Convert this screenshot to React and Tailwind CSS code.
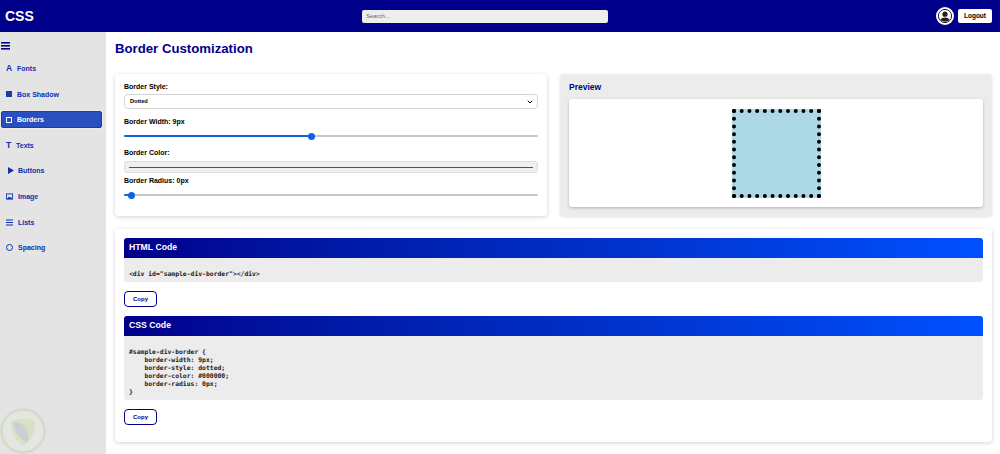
import React from 'react'
import { ChevronDown } from 'lucide-react'

const HollowSquare = () => <span className="w-[6px] h-[6px] border-[1.5px] border-white bg-transparent"></span>
const SolidSquare = () => <span className="w-[6px] h-[6px] bg-[#1c3da0]"></span>
const Glyph = ({ text }) => <span className="text-[8.5px] font-bold leading-none">{text}</span>
const Ring = () => <span className="w-[7px] h-[7px] rounded-full border-[1.5px] border-[#0d2fb0]"></span>

const PlayIcon = () => (
    <svg width="6" height="7" viewBox="0 0 6 7" fill="currentColor">
        <path d="M0 0 L6 3.5 L0 7 Z" />
    </svg>
)

const ImageIcon = () => (
    <svg width="7" height="7" viewBox="0 0 7 7">
        <rect x="0.4" y="0.9" width="6.2" height="5.2" fill="#dfe6f5" stroke="#0d2fb0" strokeWidth="0.9" />
        <path d="M1 6 L3 3.4 L4.3 4.8 L5 4 L6 6 Z" fill="#0d2fb0" />
    </svg>
)

const ListIcon = () => (
    <svg width="7" height="7" viewBox="0 0 7 7" fill="#0d2fb0">
        <rect y="0.5" width="7" height="1" />
        <rect y="3" width="7" height="1" />
        <rect y="5.5" width="7" height="1" />
    </svg>
)

const navItems = [
    { label: 'Fonts', icon: <Glyph text="A" />, slot: 'w-[7px]' },
    { label: 'Box Shadow', icon: <SolidSquare />, slot: 'w-[7px]' },
    { label: 'Borders', icon: <HollowSquare />, slot: 'w-[7px]', active: true },
    { label: 'Texts', icon: <Glyph text="T" />, slot: 'w-[6px]' },
    { label: 'Buttons', icon: <PlayIcon />, slot: 'w-[8px] pl-[2px]' },
    { label: 'Image', icon: <ImageIcon />, slot: 'w-[8px]' },
    { label: 'Lists', icon: <ListIcon />, slot: 'w-[8px]' },
    { label: 'Spacing', icon: <Ring />, slot: 'w-[8px]' },
]

const htmlCode = '<div id="sample-div-border"></div>'
const cssCode = `#sample-div-border {
    border-width: 9px;
    border-style: dotted;
    border-color: #000000;
    border-radius: 0px;
}`

const Slider = ({ percent }) => (
    <div className="h-[14px] flex items-center">
        <div className="relative w-full h-[2px] bg-[#c8c8c8] rounded-full">
            <div className="h-full bg-[#0f62e6] rounded-full" style={{ width: `${percent}%` }}></div>
            <div
                className="absolute top-[-2.5px] w-[7px] h-[7px] rounded-full bg-[#0f62e6] -ml-[3.5px]"
                style={{ left: `${percent}%` }}
            ></div>
        </div>
    </div>
)

const NavItem = ({ item }) => (
    <div
        className={
            item.active
                ? 'flex items-center gap-[4px] h-[17px] ml-[1px] mr-[4px] pl-[4px] bg-[#2a50c0] border border-[#1c3da0] rounded-[2px] text-white shadow-[0_0_2px_#ffffff]'
                : 'flex items-center gap-[4px] h-[17px] ml-[1px] mr-[4px] pl-[4px] border border-transparent text-[#0d2fb0]'
        }
    >
        <span className={`${item.slot} flex justify-start items-center shrink-0`}>{item.icon}</span>
        <span className="text-[7px] font-bold leading-none">{item.label}</span>
    </div>
)

const CodeBlock = ({ title, code, className }) => (
    <div>
        <div className="h-[20px] flex items-center pl-[5px] bg-gradient-to-r from-[#00008b] to-[#0050ff] rounded-t-[3px] text-white text-[8.7px] font-bold">
            {title}
        </div>
        <pre className={`${className} px-[5px] bg-[#ececec] rounded-b-[3px] font-['DejaVu_Sans_Mono',monospace] text-[6.4px] leading-[8px] font-bold text-[#1a1a1a]`}>
            {code}
        </pre>
        <button className="block w-[33px] h-[16px] mt-[9px] bg-white border border-[#00008b] rounded-[4px] text-[#00008b] text-[6px] font-bold">
            Copy
        </button>
    </div>
)

const Watermark = () => (
    <svg className="absolute left-0 bottom-0 w-[47px] h-[47px] opacity-60" viewBox="0 0 47 47">
        <circle cx="23" cy="24" r="21.5" fill="#e6e6e2" stroke="#c9d6b8" strokeWidth="2.5" />
        <path d="M11 14 Q23 9 35 14 Q36 30 23 39 Q10 30 11 14 Z" fill="#cfe0ae" />
        <path d="M13 15 Q14 28 27 36 Q31 30 25 20 Q20 15 13 15 Z" fill="#b9c4c9" />
    </svg>
)

const App = () => {
    return (
        <div className="h-screen flex flex-col overflow-hidden bg-white font-['Liberation_Sans',Arial,sans-serif]">
            <header className="h-8 shrink-0 flex items-center justify-between pl-[5px] pr-[8px] bg-[#00008b]">
                <h1 className="text-[14px] font-bold text-white leading-none">CSS</h1>
                <div className="w-[246px] h-[13px] flex items-center pl-[4px] bg-[#eeeeee] rounded-[2px] text-[6px] text-[#666666]">
                    Search...
                </div>
                <div className="flex items-center gap-[4px]">
                    <svg width="18" height="18" viewBox="0 0 18 18">
                        <circle cx="9" cy="9" r="9" fill="#ffffff" />
                        <circle cx="9" cy="9" r="6.6" fill="#ffffff" stroke="#222222" strokeWidth="1" />
                        <circle cx="9" cy="7.2" r="2.6" fill="#222222" />
                        <path d="M4.4 13 Q5 10.4 9 10.4 Q13 10.4 13.6 13 Q9 16.6 4.4 13 Z" fill="#222222" />
                    </svg>
                    <button className="w-[34px] h-[14px] bg-white rounded-[2px] text-[6.5px] font-bold text-black">
                        Logout
                    </button>
                </div>
            </header>

            <div className="flex-1 flex min-h-0">
                <aside className="relative w-[106px] shrink-0 bg-[#e4e4e4] pt-[10px]">
                    <svg width="11" height="8" viewBox="0 0 11 8" fill="#00008b" className="ml-[1px]">
                        <rect width="9" height="1.6" />
                        <rect y="3" width="9" height="1.6" />
                        <rect y="6" width="9" height="1.6" />
                    </svg>
                    <nav className="flex flex-col gap-[8.6px] mt-[10px]">
                        {navItems.map((item) => (
                            <NavItem key={item.label} item={item} />
                        ))}
                    </nav>
                    <Watermark />
                </aside>

                <main className="flex-1 min-w-0 pl-[9px] pr-[8px] pt-[8px]">
                    <h2 className="text-[13.2px] leading-[17px] font-bold text-[#00008b]">Border Customization</h2>

                    <div className="grid grid-cols-2 gap-[13px] mt-[17px]">
                        <section className="h-[142px] px-[9px] pt-[8px] bg-white rounded-[4px] shadow-[0_1px_4px_rgba(0,0,0,0.18)] text-[7px] font-bold text-black">
                            <label className="block leading-[9px]">Border Style:</label>
                            <div className="flex items-center justify-between h-[15px] mt-[3px] pl-[5px] pr-[3px] bg-white border border-[#d4d4d4] rounded-[4px] text-[5.6px] font-bold">
                                Dotted
                                <ChevronDown size={8} strokeWidth={3} />
                            </div>
                            <label className="block mt-[8px] leading-[9px]">Border Width: 9px</label>
                            <div className="mt-[3px]">
                                <Slider percent={45.3} />
                            </div>
                            <label className="block mt-[5px] leading-[9px]">Border Color:</label>
                            <div className="flex items-center h-[12px] mt-[4px] px-[4px] bg-[#efefef] border border-[#dddddd] rounded-[3px]">
                                <div className="w-full h-[1px] bg-[#555555]"></div>
                            </div>
                            <label className="block mt-[3px] leading-[9px]">Border Radius: 0px</label>
                            <div className="mt-[3px]">
                                <Slider percent={1.7} />
                            </div>
                        </section>

                        <section className="h-[142px] px-[9px] pt-[8px] bg-[#ececec] rounded-[4px] shadow-[0_1px_3px_rgba(0,0,0,0.12)]">
                            <h3 className="text-[8.5px] leading-[11px] font-bold text-[#00008b]">Preview</h3>
                            <div className="h-[108px] mt-[6px] flex items-center justify-center bg-white rounded-[3px] shadow-[0_1px_3px_rgba(0,0,0,0.25)]">
                                <div className="w-[89px] h-[89px] bg-[#add8e6] border-4 border-dotted border-black"></div>
                            </div>
                        </section>
                    </div>

                    <section className="flex flex-col gap-[9px] h-[213px] mt-[13px] px-[9px] pt-[9px] bg-white rounded-[4px] shadow-[0_1px_4px_rgba(0,0,0,0.18)]">
                        <CodeBlock title="HTML Code" code={htmlCode} className="h-[24px] pt-[12px]" />
                        <CodeBlock title="CSS Code" code={cssCode} className="h-[64px] pt-[12px]" />
                    </section>
                </main>
            </div>
        </div>
    )
}

export default App
